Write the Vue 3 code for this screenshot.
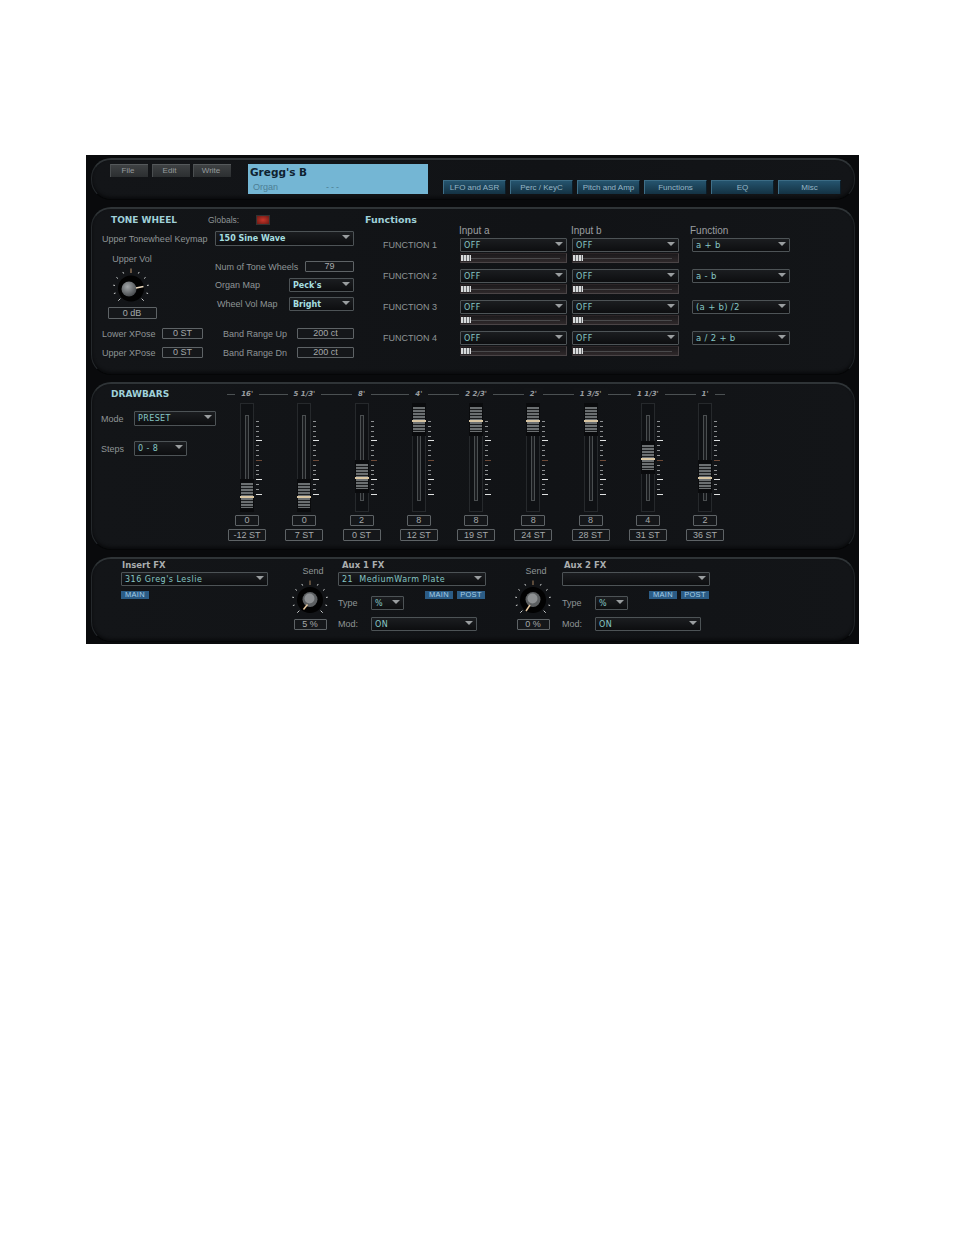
<script setup>
const menuButtons = ['File', 'Edit', 'Write']
const tabs = ['LFO and ASR', 'Perc / KeyC', 'Pitch and Amp', 'Functions', 'EQ', 'Misc']
const functions = [
  { name: 'FUNCTION 1', fn: 'a + b' },
  { name: 'FUNCTION 2', fn: 'a - b' },
  { name: 'FUNCTION 3', fn: '(a + b) /2' },
  { name: 'FUNCTION 4', fn: 'a / 2 + b' }
]
const bars = [
  { label: "16'", value: 0, st: '-12 ST' },
  { label: "5 1/3'", value: 0, st: '7 ST' },
  { label: "8'", value: 2, st: '0 ST' },
  { label: "4'", value: 8, st: '12 ST' },
  { label: "2 2/3'", value: 8, st: '19 ST' },
  { label: "2'", value: 8, st: '24 ST' },
  { label: "1 3/5'", value: 8, st: '28 ST' },
  { label: "1 1/3'", value: 4, st: '31 ST' },
  { label: "1'", value: 2, st: '36 ST' }
]
const ticks = Array.from({ length: 16 }, (_, i) => ({
  long: i === 4 || i === 12 || i === 15,
  mark: i === 8
}))
const knobTicks = Array.from({ length: 11 }, (_, i) => {
  const a = ((-135 + i * 27) * Math.PI) / 180
  const major = i === 0 || i === 10 || i === 5
  const r1 = major ? 15 : 16.2
  const r2 = i === 5 ? 19.5 : 18
  return {
    x1: 20 + r1 * Math.sin(a),
    y1: 20 - r1 * Math.cos(a),
    x2: 20 + r2 * Math.sin(a),
    y2: 20 - r2 * Math.cos(a),
    top: i === 5
  }
})
const auxes = [
  { title: 'Aux 1 FX', patch: '21  MediumWarm Plate', send: '5 %', x1: 17.5, y1: 24.5, x2: 13.5, y2: 29.5 },
  { title: 'Aux 2 FX', patch: '', send: '0 %', x1: 17, y1: 25, x2: 13, y2: 31 }
]
const thumbTop = (v) => 75 - v * 9.5
</script>

<template>
  <div class="page">
    <div class="rack">
      <section class="panel top">
        <button v-for="b in menuButtons" :key="b" class="menu">{{ b }}</button>
        <div class="display">
          <div class="patch">Gregg's B</div>
          <div class="sub"><span class="cat">Organ</span><span class="dash">---</span></div>
        </div>
        <div class="tabs">
          <button v-for="t in tabs" :key="t" class="tab">{{ t }}</button>
        </div>
      </section>

      <section class="panel tone">
        <div class="tone-left">
          <div class="tone-head">
            <h2 class="title tw">TONE WHEEL</h2>
            <span class="lab globals">Globals:</span>
            <span class="led"></span>
          </div>
          <div class="keymap">
            <span class="lab keylab">Upper Tonewheel Keymap</span>
            <div class="sel grow bold"><span>150 Sine Wave</span><i></i></div>
          </div>
          <div class="middle">
            <div class="volcol">
              <span class="lab">Upper Vol</span>
              <svg class="knob upper" viewBox="0 0 40 40">
                <defs>
                  <radialGradient id="metal" cx="0.4" cy="0.35" r="0.8">
                    <stop offset="0" stop-color="#a2a6a8" />
                    <stop offset="1" stop-color="#34373a" />
                  </radialGradient>
                </defs>
                <line v-for="(k, i) in knobTicks" :key="i" :x1="k.x1" :y1="k.y1" :x2="k.x2" :y2="k.y2" :stroke="k.top ? '#c49a70' : '#cfd2d2'" stroke-width="1" />
                <circle cx="20" cy="20.5" r="13" fill="#020202" />
                <circle cx="18" cy="21" r="7.5" fill="url(#metal)" />
                <line x1="25" y1="20" x2="32.5" y2="18.5" stroke="#efdcc0" stroke-width="1.4" />
              </svg>
              <div class="read vol">0 dB</div>
            </div>
            <div class="maps">
              <div class="maprow first">
                <span class="lab">Num of Tone Wheels</span>
                <div class="read mapval">79</div>
              </div>
              <div class="maprow">
                <span class="lab">Organ Map</span>
                <div class="sel mapsel bold"><span>Peck's</span><i></i></div>
              </div>
              <div class="maprow">
                <span class="lab indent">Wheel Vol Map</span>
                <div class="sel mapsel bold"><span>Bright</span><i></i></div>
              </div>
            </div>
          </div>
          <div class="xrow xfirst">
            <span class="lab xlab">Lower XPose</span>
            <div class="read xval">0 ST</div>
            <span class="lab blab">Band Range Up</span>
            <div class="read bval">200 ct</div>
          </div>
          <div class="xrow">
            <span class="lab xlab">Upper XPose</span>
            <div class="read xval">0 ST</div>
            <span class="lab blab">Band Range Dn</span>
            <div class="read bval">200 ct</div>
          </div>
        </div>
        <div class="tone-right">
          <h2 class="title fn">Functions</h2>
          <div class="fn-heads">
            <span class="fh a">Input a</span>
            <span class="fh b">Input b</span>
            <span class="fh c">Function</span>
          </div>
          <div v-for="f in functions" :key="f.name" class="fn-row">
            <span class="lab fn-name">{{ f.name }}</span>
            <div v-for="n in 2" :key="n" class="input">
              <div class="sel"><span>OFF</span><i></i></div>
              <div class="slider"><b></b></div>
            </div>
            <div class="sel fn-sel"><span>{{ f.fn }}</span><i></i></div>
          </div>
        </div>
      </section>

      <section class="panel draw">
        <div class="draw-left">
          <h2 class="title db">DRAWBARS</h2>
          <div class="drow mode">
            <span class="lab dlab">Mode</span>
            <div class="sel modesel"><span>PRESET</span><i></i></div>
          </div>
          <div class="drow steps">
            <span class="lab dlab">Steps</span>
            <div class="sel stepsel"><span>0 - 8</span><i></i></div>
          </div>
        </div>
        <div class="bars">
          <div v-for="b in bars" :key="b.label" class="bar-head"><span>{{ b.label }}</span></div>
          <div v-for="b in bars" :key="b.label + 'c'" class="bar">
            <div class="track">
              <div class="slot"></div>
              <div class="ticks">
                <u v-for="(t, i) in ticks" :key="i" :class="{ long: t.long, mark: t.mark }"></u>
              </div>
              <div class="thumb" :style="{ top: thumbTop(b.value) + 'px' }"><em></em></div>
            </div>
            <div class="read barval">{{ b.value }}</div>
            <div class="read barst">{{ b.st }}</div>
          </div>
        </div>
      </section>

      <section class="panel fx">
        <div class="insert">
          <h3 class="fxtitle">Insert FX</h3>
          <div class="sel fxsel"><span>316  Greg's Leslie</span><i></i></div>
          <div class="tags start"><span class="tag">MAIN</span></div>
        </div>
        <template v-for="(a, ai) in auxes" :key="a.title">
          <div class="send" :class="ai === 0 ? 's1' : 's2'">
            <span class="lab sendlab">Send</span>
            <svg class="knob" viewBox="0 0 40 40">
              <line v-for="(k, i) in knobTicks" :key="i" :x1="k.x1" :y1="k.y1" :x2="k.x2" :y2="k.y2" :stroke="k.top ? '#a8845f' : '#cfd2d2'" stroke-width="1" />
              <circle cx="20" cy="20" r="13" fill="#020202" />
              <circle cx="20" cy="19.5" r="7.5" fill="#5c5f61" />
              <circle cx="19.5" cy="18.5" r="5" fill="#8d9092" />
              <line :x1="a.x1" :y1="a.y1" :x2="a.x2" :y2="a.y2" stroke="#e6c8a0" stroke-width="1.5" />
            </svg>
            <div class="read sendval">{{ a.send }}</div>
          </div>
          <div class="aux">
            <h3 class="fxtitle" :class="ai === 0 ? 'in4' : 'in2'">{{ a.title }}</h3>
            <div class="sel fxsel"><span>{{ a.patch }}</span><i></i></div>
            <div class="tags"><span class="tag">MAIN</span><span class="tag">POST</span></div>
            <div class="auxrow type">
              <span class="lab auxlab">Type</span>
              <div class="sel typesel"><span>%</span><i></i></div>
            </div>
            <div class="auxrow modrow">
              <span class="lab auxlab">Mod:</span>
              <div class="sel modsel"><span>ON</span><i></i></div>
            </div>
          </div>
        </template>
      </section>
    </div>
  </div>
</template>

<style>
html, body { margin: 0; background: #fff; }
</style>

<style scoped>
.page {
  box-sizing: border-box;
  height: 1235px;
  padding: 155px 0 0 86px;
  background: #fff;
  font-family: "Liberation Sans", Arial, sans-serif;
}
.rack {
  box-sizing: border-box;
  width: 773px;
  height: 489px;
  padding: 3px 4px 2px 5px;
  display: flex;
  flex-direction: column;
  gap: 7px;
  background: #090a0c;
}
.panel {
  box-sizing: border-box;
  display: flex;
  background: linear-gradient(90deg, #131518, #111316 60%, #131518);
  border-top: 2px solid #2f3437;
  border-left: 1px solid #24282b;
  border-right: 1px solid #1f2326;
  border-bottom: 1px solid #050607;
  border-radius: 20px;
  box-shadow: inset 0 -2px 3px #0a0b0d;
}
.lab {
  font-size: 9px;
  line-height: 12px;
  color: #8f9496;
  white-space: nowrap;
}
.title {
  margin: 0;
  font-family: "DejaVu Sans", sans-serif;
  font-size: 9px;
  line-height: 12px;
  font-weight: 700;
  color: #9fd0d8;
  white-space: nowrap;
}
.sel {
  box-sizing: border-box;
  position: relative;
  height: 14px;
  display: flex;
  align-items: center;
  padding-left: 3px;
  border: 1px solid #4d5356;
  border-radius: 1px;
  background: linear-gradient(#1b1d20, #0d0e10);
  font-family: "DejaVu Sans", sans-serif;
  font-size: 8px;
  letter-spacing: 0.4px;
  color: #86c6c4;
  white-space: pre;
}
.sel i {
  position: absolute;
  right: 3px;
  top: 3px;
  width: 0;
  height: 0;
  border-left: 4px solid transparent;
  border-right: 4px solid transparent;
  border-top: 4px solid #9a9ea0;
}
.bold { font-weight: 700; color: #a6dfe0; letter-spacing: 0; }
.read {
  box-sizing: border-box;
  border: 1px solid #5e6366;
  border-radius: 1px;
  background: #15171a;
  color: #a5a9aa;
  font-size: 9px;
  line-height: 9px;
  text-align: center;
  white-space: nowrap;
}

/* top bar */
.top { height: 42px; padding: 4px 0 0 18px; align-items: flex-start; }
.menu {
  box-sizing: border-box;
  width: 38px;
  height: 13px;
  margin: 0 3.5px 0 0;
  padding: 0 3px 0 0;
  border: 0;
  border-top: 1px solid #55595b;
  border-left: 1px solid #4a4e50;
  background: linear-gradient(#3e4143, #2c2f31);
  color: #959a9c;
  font: 8px/12px "Liberation Sans", Arial, sans-serif;
}
.menu:nth-child(3) { margin-right: 0; }
.display {
  box-sizing: border-box;
  width: 180px;
  height: 30px;
  margin-left: 17px;
  padding: 1px 2px;
  background: #74b6d4;
}
.patch {
  font-family: "DejaVu Sans", sans-serif;
  font-size: 10.5px;
  line-height: 14px;
  font-weight: 700;
  color: #0f2230;
}
.sub {
  display: flex;
  margin-top: 2px;
  font-size: 9px;
  line-height: 12px;
  color: #4d7e94;
}
.cat { width: 73px; margin-left: 3px; }
.dash { letter-spacing: 2px; }
.tabs { display: flex; gap: 4px; margin: 16px 0 0 15px; }
.tab {
  box-sizing: border-box;
  width: 63px;
  height: 14px;
  margin: 0;
  padding: 0;
  border: 0;
  border-top: 1px solid #3c6c85;
  border-left: 1px solid #3f6f88;
  border-right: 1px solid #0c1d28;
  background: linear-gradient(#25546e, #143243);
  color: #96b6c6;
  font: 8px/12px "Liberation Sans", Arial, sans-serif;
  white-space: nowrap;
}

/* tone wheel */
.tone { height: 168px; padding: 5px 0 0 10px; }
.tone-left { width: 252px; }
.tone-head { display: flex; align-items: center; height: 12px; }
.tw { width: 106px; padding-left: 9px; box-sizing: border-box; }
.globals { width: 48px; font-size: 8.5px; }
.led {
  width: 14px;
  height: 10px;
  box-sizing: border-box;
  border: 1px solid #333;
  background: radial-gradient(#c8352a, #6a1a14);
}
.keymap { display: flex; align-items: center; margin-top: 5px; height: 15px; }
.keylab { width: 113px; }
.grow { flex: 1; height: 15px; padding-left: 3px; }
.middle { display: flex; margin-top: 6px; height: 67px; }
.volcol {
  width: 60px;
  margin-right: 53px;
  margin-top: 1px;
  display: flex;
  flex-direction: column;
  align-items: center;
}
.knob { display: block; width: 40px; height: 40px; flex: none; }
.upper { margin: 3px 3px 0 0; }
.vol { width: 49px; height: 12px; line-height: 10px; margin-top: -1px; }
.maps { width: 139px; padding-top: 9px; }
.maprow { display: flex; justify-content: space-between; align-items: center; height: 14px; margin-bottom: 5px; }
.maprow.first { height: 11px; margin-bottom: 6px; }
.indent { margin-left: 2px; }
.mapval { width: 49px; height: 11px; }
.mapsel { width: 65px; }
.xrow { display: flex; align-items: center; height: 11px; margin-top: 8px; }
.xfirst { margin-top: 9px; }
.xlab { width: 60px; }
.xval { width: 41px; height: 11px; }
.blab { width: 74px; margin-left: 20px; }
.bval { width: 57px; height: 11px; }

.tone-right { margin-left: 11px; }
.fn { font-size: 9.5px; line-height: 12px; }
.fn-heads { position: relative; height: 13px; margin-top: -1px; }
.fh { position: absolute; top: 0; font-size: 10px; line-height: 12px; color: #9a9ea0; }
.fh.a { left: 94px; }
.fh.b { left: 206px; }
.fh.c { left: 325px; }
.fn-row { display: flex; align-items: flex-start; height: 25px; margin-bottom: 6px; }
.fn-name { box-sizing: border-box; width: 95px; padding-left: 18px; line-height: 14px; }
.input { width: 107px; margin-right: 5px; }
.slider {
  box-sizing: border-box;
  position: relative;
  height: 10px;
  margin-top: 1px;
  border: 1px solid #2c2527;
  border-bottom-color: #4a4446;
  border-right-color: #4a4446;
  background: linear-gradient(#1c1a1c, #2e282a);
}
.slider::before {
  content: "";
  position: absolute;
  left: 10px;
  right: 6px;
  top: 4px;
  height: 1px;
  background: #4a4a4c;
}
.slider b {
  position: absolute;
  left: 0;
  top: 1px;
  width: 10px;
  height: 6px;
  background: repeating-linear-gradient(90deg, #d8dadb 0 2px, #6a6d70 2px 3px);
}
.fn-sel { width: 98px; margin-left: 8px; font-size: 8.5px; letter-spacing: 0.3px; }

/* drawbars */
.draw { height: 168px; padding: 4px 0 0 9px; }
.draw-left { width: 117.5px; flex: none; }
.db { padding-left: 10px; }
.drow { display: flex; align-items: center; }
.mode { margin-top: 11px; }
.steps { margin-top: 15px; }
.dlab { width: 33px; }
.modesel { width: 82px; height: 15px; font-size: 8px; }
.stepsel { width: 53px; height: 15px; }
.bars {
  display: grid;
  grid-template-columns: repeat(9, 57.25px);
  grid-template-rows: 12px auto;
  background: linear-gradient(#4b5052, #4b5052) 8px 5.5px / 498px 1px no-repeat;
}
.bar-head { display: flex; justify-content: center; }
.bar-head span {
  padding: 0 6px;
  background: #121417;
  font-family: "DejaVu Sans", sans-serif;
  font-size: 7px;
  line-height: 12px;
  font-style: italic;
  font-weight: 700;
  color: #9a9ea0;
  white-space: nowrap;
}
.bar { display: flex; flex-direction: column; align-items: center; padding-top: 3px; }
.track {
  box-sizing: border-box;
  position: relative;
  width: 14px;
  height: 109px;
  border: 1px solid #26292c;
  background: #0f1114;
}
.slot {
  box-sizing: border-box;
  width: 4px;
  height: 86px;
  margin: 11px auto 0;
  border: 1px solid #4a4e50;
  background: #1a1c1f;
}
.ticks {
  position: absolute;
  left: 15px;
  top: 17px;
  height: 74px;
  display: flex;
  flex-direction: column;
  justify-content: space-between;
}
.ticks u {
  display: block;
  width: 3px;
  height: 1px;
  background: #8e9193;
}
.ticks u.long { width: 6px; background: #e0e2e2; }
.ticks u.mark { width: 6px; background: #6e4a38; }
.thumb {
  position: absolute;
  left: -1px;
  width: 14px;
  height: 33px;
  background: #0a0b0d;
}
.thumb::before {
  content: "";
  position: absolute;
  left: 1px;
  right: 1px;
  top: 4px;
  bottom: 4px;
  background: repeating-linear-gradient(#6b6f71 0 2px, #1a1c1e 2px 3px);
}
.thumb em {
  position: absolute;
  left: 0;
  right: 0;
  top: 17px;
  height: 2px;
  background: #d8c5a2;
}
.barval { width: 24px; height: 11px; margin-top: 3px; }
.barst { width: 38px; height: 12px; line-height: 10px; margin-top: 3px; font-size: 9px; }

/* fx */
.fx { height: 85px; padding: 0 0 0 29px; }
.insert { width: 147px; }
.fxtitle {
  margin: 0;
  height: 13px;
  padding-left: 1px;
  font-family: "DejaVu Sans", sans-serif;
  font-size: 8.5px;
  line-height: 12px;
  font-weight: 700;
  color: #a9adae;
}
.in4 { padding-left: 4px; }
.in2 { padding-left: 2px; }
.fxsel { height: 14px; font-size: 8px; letter-spacing: 0.5px; }
.tags { display: flex; justify-content: flex-end; gap: 4px; margin: 5px 1px 0 0; }
.tags.start { justify-content: flex-start; }
.tag {
  box-sizing: border-box;
  width: 28px;
  height: 8px;
  background: #2b5c86;
  color: #a4cde6;
  font-size: 7.5px;
  line-height: 8px;
  letter-spacing: 0.3px;
  text-align: center;
}
.send { width: 40px; display: flex; flex-direction: column; align-items: center; margin-top: 6px; flex: none; }
.s1 { margin: 6px 8px 0 22px; }
.s2 { margin: 6px 9px 0 27px; }
.sendlab { margin-left: 6px; }
.send .knob { margin-top: 3px; }
.sendval { width: 33px; height: 11px; margin-top: -1px; }
.aux { width: 148px; flex: none; }
.auxrow { display: flex; align-items: center; }
.type { margin-top: -3px; }
.modrow { margin-top: 7px; }
.auxlab { width: 33px; }
.typesel { width: 33px; }
.modsel { width: 106px; }
</style>
